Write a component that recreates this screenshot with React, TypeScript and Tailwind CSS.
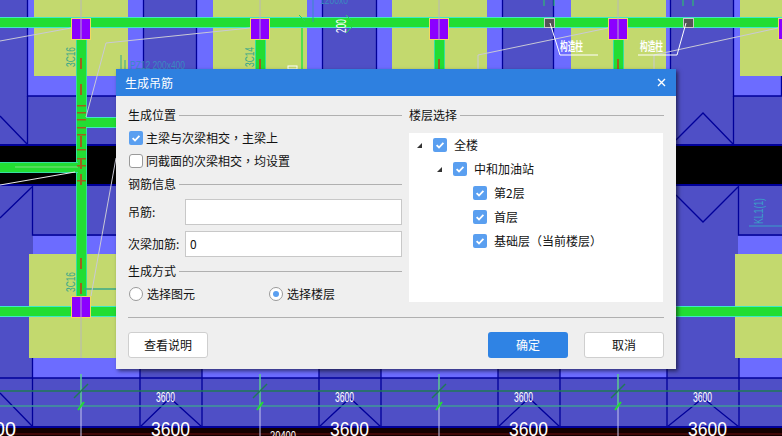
import React from "react";

const NAVY = "#00009a";
const BASE = "#4f4fc6";
const LIGHT = "#6c6cff";
const YEL = "#c3d96e";
const GREEN = "#22dd33";
const CYAN = "#3fe8c8";
const TEAL = "#3aa88a";

function HBeam({ x, y, w }: { x: number; y: number; w: number }) {
  return (
    <g>
      <rect x={x} y={y} width={w} height={11} fill={CYAN} />
      <rect x={x} y={y + 1} width={w} height={9} fill={GREEN} />
    </g>
  );
}

function VBeam({ x, y, h }: { x: number; y: number; h: number }) {
  return (
    <g>
      <rect x={x} y={y} width={11} height={h} fill="#35e0a0" />
      <rect x={x + 1} y={y} width={9} height={h} fill={GREEN} />
    </g>
  );
}

function Column({ x, y }: { x: number; y: number }) {
  return (
    <g>
      <rect x={x + 0.5} y={y + 0.5} width={19} height={21} fill="#8b00ff" stroke="#f2d860" />
      <line x1={x + 10} x2={x + 10} y1={y} y2={y + 22} stroke="#b9a6c9" />
    </g>
  );
}

function Dashes({ x, ys }: { x: number; ys: number[] }) {
  return (
    <g>
      {ys.map((y) => (
        <rect key={y} x={x} y={y} width={2} height={11} fill="#a0601c" />
      ))}
    </g>
  );
}

function Rebar({ y }: { y: number }) {
  return <rect x={77} y={y} width={9} height={1.5} fill="#a0601c" />;
}

function RotText({ x, y, w, fill, size, children }: { x: number; y: number; w: number; fill: string; size: number; children: string }) {
  return (
    <text
      transform={`rotate(-90 ${x} ${y})`}
      x={x}
      y={y}
      fill={fill}
      fontSize={size}
      textLength={w}
      lengthAdjust="spacingAndGlyphs"
      fontFamily="'Liberation Sans', sans-serif"
    >
      {children}
    </text>
  );
}

function Cad() {
  return (
    <svg width={782} height={436} viewBox="0 0 782 436" className="block">
      <rect width={782} height={436} fill={BASE} />
      {/* upper light bays */}
      {[[28, 144], [197, 323], [377, 503], [554, 671], [734, 782]].map(([a, b]) => (
        <g key={a}>
          <rect x={a} y={0} width={b - a} height={96} fill={LIGHT} />
          <path d={`M${a - 0.5} 0V96H${b}M${b - 0.5} 0V96`} stroke={NAVY} fill="none" strokeWidth={1.3} />
        </g>
      ))}
      {[[34, 94], [213, 94], [392, 95], [571, 95], [740, 42]].map(([x, w]) => (
        <rect key={x} x={x} y={0} width={w} height={76} fill={YEL} />
      ))}
      {/* diagonals upper */}
      <path d="M0 116L27 144M676 140L703 113L733 144M27.5 96V145M733.5 96V145" stroke={NAVY} fill="none" strokeWidth={1.3} />
      {/* black band */}
      <rect x={0} y={144} width={782} height={42} fill={NAVY} />
      <rect x={0} y={146} width={782} height={38} fill="#000000" />
      {/* lower area */}
      <rect x={33} y={236} width={749} height={18} fill={LIGHT} />
      <rect x={33} y={254} width={83} height={115} fill={LIGHT} />
      <rect x={676} y={235} width={62} height={134} fill={BASE} />
      <rect x={739} y={236} width={43} height={142} fill={LIGHT} />
      <path d="M32.5 186V235H116M738.5 186V235H782" stroke={NAVY} fill="none" strokeWidth={1.3} />
      <path d="M0 218L32 187M676 195L703 222L738 187" stroke={NAVY} fill="none" strokeWidth={1.3} />
      <rect x={29} y={254} width={90} height={104} fill={YEL} />
      <rect x={735} y={254} width={47} height={104} fill={YEL} />
      {/* bottom bays */}
      {[[33, 140], [202, 319], [381, 498], [560, 667], [739, 782]].map(([a, b]) => (
        <rect key={a} x={a} y={358} width={b - a} height={20} fill={LIGHT} />
      ))}
      <path d="M32.5 358V427M140 358V427M202 358V427M319 358V427M381 358V427M498 358V427M560 358V427M667 358V427M739 358V427M0 378H782" stroke={NAVY} fill="none" strokeWidth={1.3} />
      <path d="M0 393L32 426M140 427L170 398L202 427M319 427L350 398L381 427M498 427L529 398L560 427M667 427L703 398L739 427" stroke={NAVY} fill="none" strokeWidth={1.3} />
      <rect x={0} y={426} width={782} height={3} fill={NAVY} />
      <rect x={0} y={428} width={782} height={8} fill="#140000" />
      <line x1={0} x2={782} y1={434} y2={434} stroke="#6e1010" />

      {/* dim lines */}
      <line x1={0} x2={782} y1={391} y2={391} stroke="#1f7a55" strokeWidth={1.5} />
      <line x1={0} x2={782} y1={406} y2={406} stroke="#3f9a96" strokeWidth={1.5} />
      {[81, 260, 439, 618].map((x) => (
        <g key={x}>
          <line x1={x} x2={x} y1={374} y2={436} stroke="#c7c7ee" />
          <line x1={x} x2={x} y1={374} y2={406} stroke="#28d060" />
          <line x1={x - 7} x2={x + 7} y1={398} y2={384} stroke="#1f7a55" strokeWidth={1.5} />
          <line x1={x - 3} x2={x + 3} y1={410} y2={402} stroke="#22dd33" strokeWidth={2} />
        </g>
      ))}
      {[156, 335, 514, 693].map((x) => (
        <text key={x} x={x} y={402} fill="#fff" fontSize={15} textLength={19} lengthAdjust="spacingAndGlyphs" fontFamily="'Liberation Sans', sans-serif">3600</text>
      ))}
      {[151, 330, 509, 688].map((x) => (
        <text key={x} x={x} y={436} fill="#fff" fontSize={20} textLength={39} lengthAdjust="spacingAndGlyphs" fontFamily="'Liberation Sans', sans-serif">3600</text>
      ))}
      <text x={-6} y={436} fill="#fff" fontSize={20} textLength={22} lengthAdjust="spacingAndGlyphs" fontFamily="'Liberation Sans', sans-serif">00</text>
      <text x={270} y={440} fill="#fff" fontSize={13} textLength={26} lengthAdjust="spacingAndGlyphs" fontFamily="'Liberation Sans', sans-serif">20400</text>

      {/* beams */}
      <HBeam x={0} y={17} w={782} />
      <HBeam x={0} y={306} w={782} />
      <VBeam x={76} y={40} h={256} />
      <VBeam x={255} y={40} h={30} />
      <VBeam x={434} y={40} h={30} />
      <VBeam x={613} y={40} h={30} />
      <rect x={86} y={117} width={32} height={11} fill={CYAN} />
      <rect x={86} y={118} width={32} height={9} fill={GREEN} />
      <rect x={0} y={162} width={78} height={11} fill="#35e0a0" />
      <rect x={0} y={163} width={78} height={9} fill={GREEN} />
      <line x1={15} x2={78} y1={167} y2={167} stroke="#7fe080" />
      <line x1={84} x2={116} y1={289} y2={289} stroke={TEAL} strokeWidth={1.5} />
      <Dashes x={80} ys={[58, 84, 136, 158, 174, 258, 283]} />
      <Dashes x={259} ys={[59]} />
      <Dashes x={438} ys={[59]} />
      <Dashes x={617} ys={[59]} />
      {[105, 112, 119, 127, 134, 149, 158, 165, 180].map((y) => (
        <Rebar key={y} y={y} />
      ))}
      {[[81, 0, 18], [260, 0, 18], [439, 0, 18], [618, 0, 18], [81, 317, 358]].map(([x, a, b]) => (
        <line key={`${x}${a}`} x1={x} x2={x} y1={a} y2={b} stroke="#b8b8b8" />
      ))}
      {/* leaders */}
      <g stroke="#c9c9d6" fill="none" strokeWidth={1}>
        <path d="M0 41L71 28" />
        <path d="M250 28L106 43L86 117" />
        <path d="M608 28L478 55V69" />
        <path d="M778 28L654 55V69" />
        <path d="M116 158L91 296" />
      </g>
      <path d="M0 185L75 172" stroke="#e8e8e8" fill="none" />
      {/* columns */}
      {[71, 250, 429, 608, 778].map((x) => (
        <Column key={x} x={x} y={18} />
      ))}
      <Column x={71} y={296} />
      {/* gray small columns */}
      {[544, 683].map((x) => (
        <rect key={x} x={x + 0.5} y={18.5} width={10} height={9} fill="#555" stroke="#c8c8c8" />
      ))}
      {/* top leaders / labels */}
      <path d="M550 23L560 55H598M686 23L677 55H638" stroke="#fff" fill="none" />
      <text x={560} y={51} fill="#fff" fontSize={12} textLength={23} lengthAdjust="spacingAndGlyphs" fontFamily="'Noto Sans CJK SC', sans-serif" fontWeight={700}>构造柱</text>
      <text x={640} y={51} fill="#fff" fontSize={12} textLength={23} lengthAdjust="spacingAndGlyphs" fontFamily="'Noto Sans CJK SC', sans-serif" fontWeight={700}>构造柱</text>
      <RotText x={75} y={67} w={20} fill={TEAL} size={12.5}>3C16</RotText>
      <RotText x={254} y={67} w={20} fill={TEAL} size={12.5}>3C14</RotText>
      <RotText x={75} y={292} w={20} fill={TEAL} size={12.5}>3C16</RotText>
      <RotText x={346} y={33} w={14} fill="#fff" size={15}>200</RotText>
      <RotText x={763} y={224} w={26} fill="#3aa0c8" size={13}>KL1(1)</RotText>
      <line x1={749} x2={782} y1={226} y2={226} stroke="#3aa0c8" />
      <path d="M121 55V69M125 60V69" stroke={TEAL} fill="none" />
      <text x={130} y={69} fill="#3a8ac0" fontSize={10} textLength={55} lengthAdjust="spacingAndGlyphs" fontFamily="'Liberation Sans', sans-serif">PZ12 200x400</text>
      <path d="M313 0V22" stroke="#3a8ac0" fill="none" />
      <text x={320} y={4} fill="#3a8ac0" fontSize={10} textLength={28} lengthAdjust="spacingAndGlyphs" fontFamily="'Liberation Sans', sans-serif">1200x0</text>
      <path d="M346 15L352 21M346 33L352 27M299 15L305 21" stroke="#28d060" fill="none" />
      <line x1={302} x2={302} y1={28} y2={69} stroke="#50e050" strokeWidth={2} />
      <rect x={288} y={66} width={9} height={3} fill="none" stroke="#fff" />
      {/* green top ticks */}
      <path d="M544 0V6M554 0V6M683 0V6M693 0V6" stroke="#28d060" fill="none" />
    </svg>
  );
}

function Check({ checked }: { checked?: boolean }) {
  return checked ? (
    <span className="flex h-[14px] w-[14px] shrink-0 items-center justify-center rounded-[2px] bg-[#5a9ff0]">
      <svg width={10} height={10} viewBox="0 0 10 10">
        <path d="M1.6 5.2L4 7.5L8.4 2.8" stroke="#fff" strokeWidth={1.8} fill="none" />
      </svg>
    </span>
  ) : (
    <span className="h-[14px] w-[14px] shrink-0 rounded-[3px] border border-[#9a9a9a] bg-white" />
  );
}

function Radio({ checked }: { checked?: boolean }) {
  return (
    <span className="flex h-[14px] w-[14px] shrink-0 items-center justify-center rounded-full border border-[#9a9a9a] bg-white">
      {checked && <span className="h-[6px] w-[6px] rounded-full bg-[#5a9ff0]" />}
    </span>
  );
}

function GroupTitle({ label }: { label: string }) {
  return (
    <div className="flex h-[18px] items-center gap-[3px]">
      <span className="text-[#111]">{label}</span>
      <span className="h-px flex-1 bg-[#b0b0b0]" />
    </div>
  );
}

function Caret() {
  return (
    <svg width={5} height={5} viewBox="0 0 5 5" className="shrink-0">
      <polygon points="5,0 5,5 0,5" fill="#333" />
    </svg>
  );
}

function TreeRow({ indent, caret, children }: { indent: string; caret?: boolean; children: React.ReactNode }) {
  return (
    <div className={`flex h-[24px] items-center ${indent}`}>
      <span className="flex w-[16px] shrink-0 items-center">{caret && <Caret />}</span>
      <Check checked />
      <span className="ml-[7px] text-[#111]">{children}</span>
    </div>
  );
}

function Btn({ label, primary, className }: { label: string; primary?: boolean; className: string }) {
  return (
    <button
      className={`h-[26px] rounded-[3px] text-[12px] ${
        primary ? "bg-[#2f83e4] text-white" : "border border-[#cfcfcf] bg-white text-[#111]"
      } ${className}`}
    >
      {label}
    </button>
  );
}

function Field({ label, value }: { label: string; value?: string }) {
  return (
    <div className="flex h-[26px] items-center">
      <span className="w-[57px] shrink-0 text-[#111]">{label}</span>
      <div className="flex h-full flex-1 items-center border border-[#c8c8c8] bg-white px-[4px] text-[#111]">{value}</div>
    </div>
  );
}

function Punct({ children }: { children: string }) {
  return (
    <span lang="zh-TW" className="[font-family:'Noto_Sans_CJK_TC',sans-serif]">
      {children}
    </span>
  );
}

export default function App() {
  return (
    <div
      lang="zh-CN"
      className="relative h-[436px] w-[782px] overflow-hidden text-[12px] leading-[18px] [font-family:'Noto_Sans_CJK_SC','Liberation_Sans',sans-serif]"
    >
      <Cad />
      <div className="absolute left-[116px] top-[69px] flex h-[300px] w-[560px] flex-col bg-[#efefef] shadow-[2px_2px_4px_rgba(0,0,0,0.55)]">
        <div className="flex h-[27px] shrink-0 items-center justify-between bg-[#2e80e0] pl-[9px] pr-[10px] text-white">
          <span>生成吊筋</span>
          <svg width={9} height={9} viewBox="0 0 9 9">
            <path d="M1 1L8 8M8 1L1 8" stroke="#fff" strokeWidth={1.4} />
          </svg>
        </div>
        <div className="flex flex-1 flex-col px-[12px] pt-[10px]">
          <div className="flex h-[199px] gap-[7px]">
            <div className="flex w-[274px] flex-col">
              <GroupTitle label="生成位置" />
              <label className="mt-[3px] flex h-[22px] items-center gap-[3px] pl-[1px] text-[#111]">
                <Check checked />
                <span>
                  主梁与次梁相交<Punct>，</Punct>主梁上
                </span>
              </label>
              <label className="mt-px flex h-[22px] items-center gap-[3px] pl-[1px] text-[#111]">
                <Check />
                <span>
                  同截面的次梁相交<Punct>，</Punct>均设置
                </span>
              </label>
              <div className="mt-[3px]">
                <GroupTitle label="钢筋信息" />
              </div>
              <div className="mt-[6px]">
                <Field label="吊筋:" />
              </div>
              <div className="mt-[6px]">
                <Field label="次梁加筋:" value="0" />
              </div>
              <div className="mt-[5px]">
                <GroupTitle label="生成方式" />
              </div>
              <div className="mt-[3px] flex h-[22px] items-center pl-[1px] text-[#111]">
                <span className="flex w-[140px] items-center gap-[4px]">
                  <Radio />
                  选择图元
                </span>
                <span className="flex items-center gap-[4px]">
                  <Radio checked />
                  选择楼层
                </span>
              </div>
            </div>
            <div className="flex w-[255px] flex-col">
              <GroupTitle label="楼层选择" />
              <div className="mt-[9px] h-[169px] w-[254px] bg-white">
                <TreeRow indent="pl-[8px]" caret>全楼</TreeRow>
                <TreeRow indent="pl-[28px]" caret>中和加油站</TreeRow>
                <TreeRow indent="pl-[48px]">第2层</TreeRow>
                <TreeRow indent="pl-[48px]">首层</TreeRow>
                <TreeRow indent="pl-[48px]">
                  基础层<Punct>（</Punct>当前楼层<Punct>）</Punct>
                </TreeRow>
              </div>
            </div>
          </div>
          <div className="mt-[12px] h-px w-[536px] bg-[#b0b0b0]" />
          <div className="mt-[14px] flex w-[536px] items-center">
            <Btn label="查看说明" className="w-[80px]" />
            <span className="flex-1" />
            <Btn label="确定" primary className="w-[80px]" />
            <Btn label="取消" className="ml-[16px] w-[80px]" />
          </div>
        </div>
      </div>
    </div>
  );
}
